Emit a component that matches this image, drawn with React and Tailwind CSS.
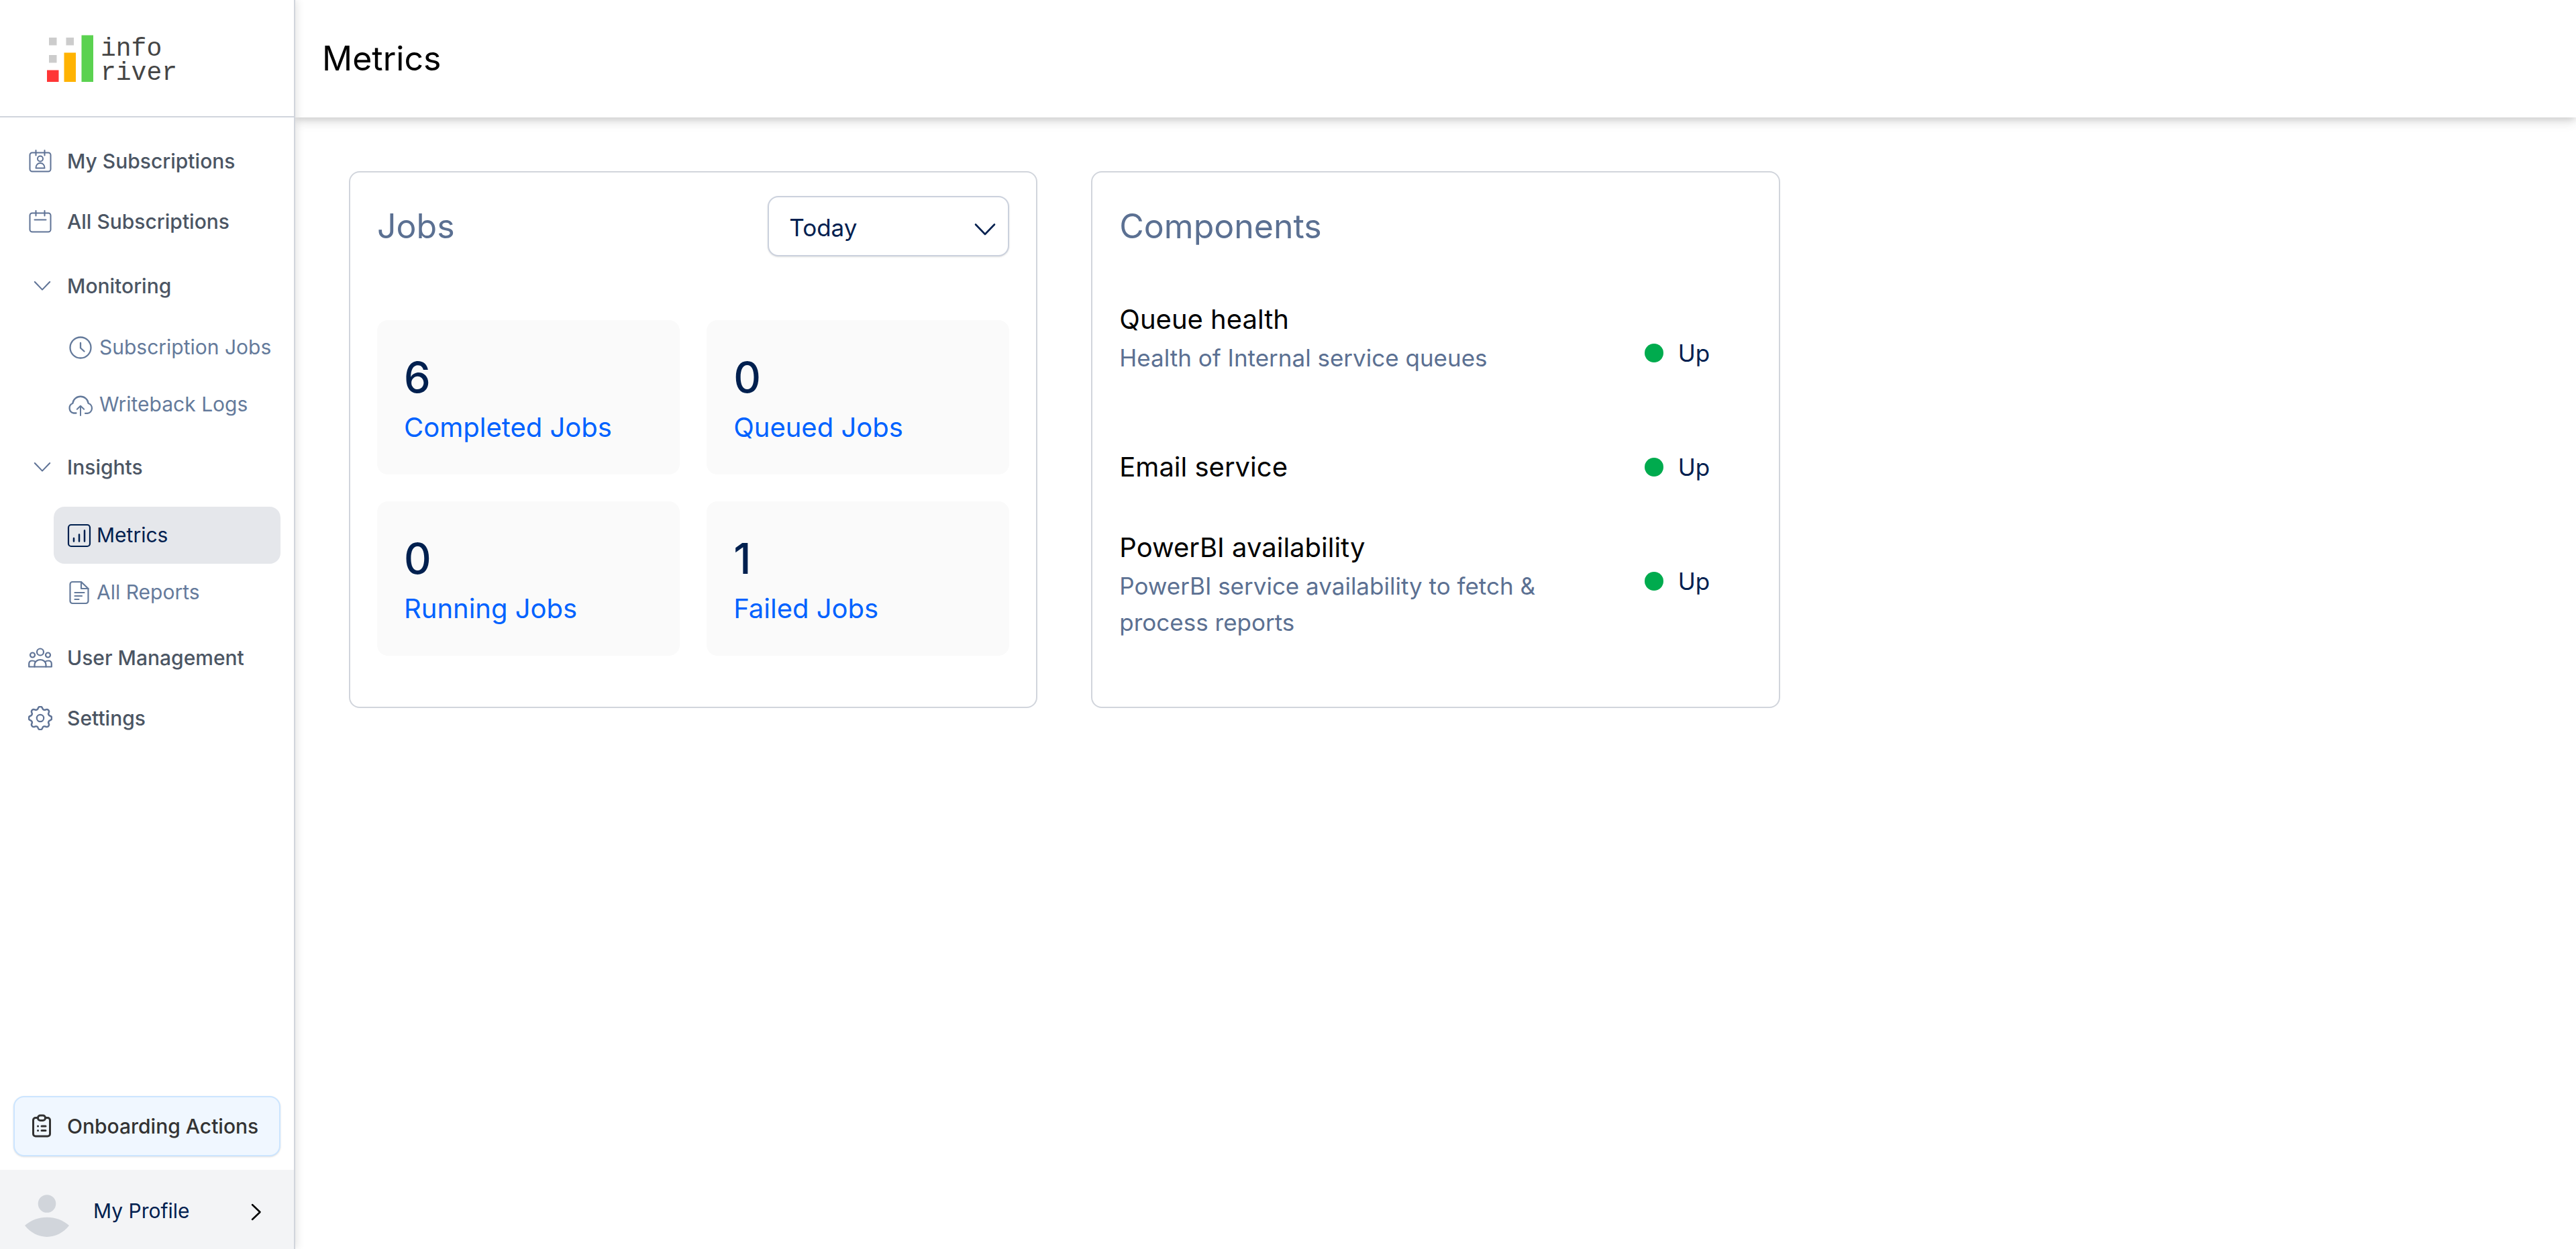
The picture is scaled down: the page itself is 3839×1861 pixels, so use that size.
import React from "react";

const line = { fill: "none", stroke: "currentColor", strokeLinecap: "round", strokeLinejoin: "round" };

function Calendar({ children }) {
  return (
    <svg viewBox="0 0 36 36" className="size-9" {...line} strokeWidth="2">
      <rect x="2.5" y="5.5" width="31" height="28" rx="3.5" />
      <path d="M11.5 2v7.5M24.5 2v7.5" />
      {children}
    </svg>
  );
}

function MySubscriptionsIcon() {
  return (
    <Calendar>
      <circle cx="18" cy="14.5" r="4" />
      <path d="M11.500 28.500c0-4.500 2.500-7.500 6.500-7.500s6.500 3 6.500 7.500z" />
    </Calendar>
  );
}

function AllSubscriptionsIcon() {
  return (
    <Calendar>
      <path d="M9.500 15.500h17" />
    </Calendar>
  );
}

function ChevronDown({ className }) {
  return (
    <svg viewBox="0 0 32 20" className={className} {...line} strokeWidth="2.600">
      <path d="M2 2.500 16 17 30 2.500" />
    </svg>
  );
}

function ClockIcon() {
  return (
    <svg viewBox="0 0 40 40" className="size-10" {...line} strokeWidth="2.300">
      <circle cx="20" cy="20" r="15.500" />
      <path d="M20 13v7.500l5.500 5" />
    </svg>
  );
}

function CloudIcon() {
  return (
    <svg viewBox="0 0 40 40" className="size-10" {...line} strokeWidth="2.300">
      <path d="M13.500 32.500H9.800A7.600 7.600 0 0 1 8.300 18 11.800 11.800 0 0 1 31.700 18 7.600 7.600 0 0 1 30.200 32.800H27" />
      <path d="M20 36V22.500M14.800 26.800l5.200-5 5.200 5" strokeWidth="2" />
    </svg>
  );
}

function ChartIcon() {
  return (
    <svg viewBox="0 0 36 36" className="size-9" {...line} strokeWidth="2.200">
      <rect x="2" y="2" width="32" height="32" rx="4" />
      <path d="M10 22v4.500M18 16.500v10M26 10.500v16" strokeWidth="2.500" />
    </svg>
  );
}

function ReportIcon() {
  return (
    <svg viewBox="0 0 36 36" className="size-9" {...line} strokeWidth="2.200">
      <path d="M21 2H8a3.500 3.500 0 0 0-3.500 3.500v25A3.500 3.500 0 0 0 8 34h20a3.500 3.500 0 0 0 3.500-3.500V12z" />
      <path d="M21 2v10h10.500M11.500 18h14M11.500 23h10.500M11.500 28h6" />
    </svg>
  );
}

function UsersIcon() {
  return (
    <svg viewBox="0 0 36 36" className="size-9" {...line} strokeWidth="2.200">
      <circle cx="18" cy="9.500" r="5" />
      <circle cx="6.500" cy="14" r="3.500" />
      <circle cx="29.500" cy="14" r="3.500" />
      <path d="M9.500 31.500v-3a8.500 7.500 0 0 1 17 0v3z" />
      <path d="M9.500 31.500H1.200v-4.500c0-3 1.800-4.500 4.800-4.500 2 0 3.500.3 4.800 1.500M26.500 31.500h8.300v-4.500c0-3-1.800-4.500-4.800-4.500-2 0-3.500.3-4.800 1.500" />
    </svg>
  );
}

function GearIcon() {
  return (
    <svg viewBox="0 0 36 36" className="size-9" {...line} strokeWidth="2.200">
      <circle cx="18" cy="18" r="5.200" />
      <path
        transform="translate(-2.700 -2.700) scale(1.150)"
        d="M15.200 5.200a2.900 2.900 0 0 1 5.600 0 2.900 2.900 0 0 0 4.300 1.800 2.900 2.900 0 0 1 3.900 3.900 2.900 2.900 0 0 0 1.800 4.300 2.900 2.900 0 0 1 0 5.600 2.900 2.900 0 0 0-1.800 4.300 2.900 2.900 0 0 1-3.900 3.900 2.900 2.900 0 0 0-4.300 1.800 2.900 2.900 0 0 1-5.600 0 2.900 2.900 0 0 0-4.300-1.800 2.900 2.900 0 0 1-3.900-3.900 2.900 2.900 0 0 0-1.800-4.300 2.900 2.900 0 0 1 0-5.600 2.900 2.900 0 0 0 1.800-4.300 2.900 2.900 0 0 1 3.900-3.900 2.900 2.900 0 0 0 4.300-1.800z"
      />
    </svg>
  );
}

function ClipboardIcon() {
  return (
    <svg viewBox="0 0 36 36" className="size-9" {...line} strokeWidth="3">
      <path d="M12 5.500H9A3.500 3.500 0 0 0 5.500 9v20.500A3.500 3.500 0 0 0 9 33h18a3.500 3.500 0 0 0 3.500-3.500V9A3.500 3.500 0 0 0 27 5.500h-3" />
      <rect x="12.500" y="2" width="11" height="7.500" rx="3.500" />
      <path d="M12.500 18h.1M12.500 24.500h.1M18 18h6M18 24.500h6" />
    </svg>
  );
}

function Avatar() {
  return (
    <svg viewBox="0 0 66 64" className="h-16 w-[66px] fill-[#d1d5db]">
      <circle cx="33" cy="13.500" r="13.300" />
      <path d="M0 46c18-16.500 48-16.500 66 0-18 22.500-48 22.500-66 0z" />
    </svg>
  );
}

function Logo() {
  return (
    <a href="#home" aria-label="info river" className="flex items-center gap-2.5">
      <svg viewBox="0 0 70 70" className="size-[70px]">
        <path fill="#ccc" d="M3 4h11.500v11.500H3zM28.500 4H40v11.500H28.500zM3 30h11.500v11.500H3z" />
        <path fill="#ff3636" d="M0 52.500h17.500V70H0z" />
        <path fill="#ffb302" d="M25.500 26.500H43V70H25.500z" />
        <path fill="#5bd250" d="M51.500 0.500H69V70H51.500z" />
      </svg>
      <span className="flex flex-col pt-2 font-['Liberation_Mono',monospace] text-[38px] leading-9 text-[#454545]">
        <span>info</span>
        <span>river</span>
      </span>
    </a>
  );
}

function NavItem({ icon, children }) {
  return (
    <a href="#nav" className="flex h-[90px] items-center gap-5 pl-10 text-[30px] font-medium text-[#4b5563]">
      <span className="flex w-10 justify-center text-[#5f7396]">{icon}</span>
      {children}
    </a>
  );
}

function NavGroup({ label, children, className }) {
  return (
    <div>
      <button type="button" aria-expanded="true" className="flex h-[90px] w-full items-center gap-5 pl-10 text-[30px] font-medium text-[#4b5563]">
        <span className="flex w-10 justify-center pl-1.5 text-[#5f7396]">
          <ChevronDown className="h-4 w-[26px]" />
        </span>
        {label}
      </button>
      <div className={className}>{children}</div>
    </div>
  );
}

function SubItem({ icon, active, children }) {
  return (
    <a
      href="#nav"
      aria-current={active ? "page" : undefined}
      className={
        active
          ? "flex h-[85px] items-center gap-2 rounded-2xl bg-[#e5e7eb] pl-5 text-[30px] text-[#00204f]"
          : "flex h-[85px] items-center gap-2 rounded-2xl pl-5 text-[30px] text-[#647a9b]"
      }
    >
      {icon}
      {children}
    </a>
  );
}

function Sidebar() {
  return (
    <aside className="z-10 flex w-[440px] shrink-0 flex-col border-r-2 border-gray-300 bg-white shadow-[2px_0_12px_rgba(0,0,0,0.12)]">
      <div className="flex h-[175px] items-center border-b-2 border-gray-300 pl-[70px]">
        <Logo />
      </div>
      <nav className="flex flex-1 flex-col pt-5 whitespace-nowrap">
        <NavItem icon={<MySubscriptionsIcon />}>My Subscriptions</NavItem>
        <NavItem icon={<AllSubscriptionsIcon />}>All Subscriptions</NavItem>
        <div className="mt-1.5 flex flex-col gap-1.5">
          <NavGroup label="Monitoring" className="mt-1 pr-5 pl-20">
            <SubItem icon={<ClockIcon />}>Subscription Jobs</SubItem>
            <SubItem icon={<CloudIcon />}>Writeback Logs</SubItem>
          </NavGroup>
          <NavGroup label="Insights" className="mt-3.5 pr-5 pb-2.5 pl-20">
            <SubItem active icon={<ChartIcon />}>Metrics</SubItem>
            <SubItem icon={<ReportIcon />}>All Reports</SubItem>
          </NavGroup>
        </div>
        <NavItem icon={<UsersIcon />}>User Management</NavItem>
        <NavItem icon={<GearIcon />}>Settings</NavItem>
      </nav>
      <div className="px-5 pb-5">
        <button
          type="button"
          className="flex h-[90px] w-full items-center gap-5 rounded-2xl border-2 border-[#cce5ff] bg-[#f0f7ff] pl-[22px] text-[30px] font-medium whitespace-nowrap text-[#333] shadow-sm"
        >
          <ClipboardIcon />
          Onboarding Actions
        </button>
      </div>
      <button type="button" className="flex h-[118px] items-center bg-gray-100 pr-12 pl-[37px] text-[30px] text-[#00204f]">
        <span className="pt-5">
          <Avatar />
        </span>
        <span className="flex-1 pt-1 pl-9 text-left">My Profile</span>
        <svg viewBox="0 0 16 26" className="mt-2 h-[26px] w-4 text-black" {...line} strokeWidth="2.500">
          <path d="M2 2 13.500 13 2 24" />
        </svg>
      </button>
    </aside>
  );
}

const jobs = [
  { count: 6, label: "Completed Jobs" },
  { count: 0, label: "Queued Jobs" },
  { count: 0, label: "Running Jobs" },
  { count: 1, label: "Failed Jobs" },
];

const components = [
  { name: "Queue health", detail: "Health of Internal service queues" },
  { name: "Email service" },
  { name: "PowerBI availability", detail: "PowerBI service availability to fetch & process reports" },
];

function Card({ title, action, children }) {
  return (
    <section className="flex min-h-[800px] flex-col rounded-2xl border-2 border-gray-300 bg-white px-10 pt-[35px]">
      <div className="flex h-[90px] items-center justify-between">
        <h2 className="text-[50px] text-[#5b7092]">{title}</h2>
        {action}
      </div>
      {children}
    </section>
  );
}

function PeriodSelect() {
  return (
    <div className="relative text-[#00204f]">
      <select
        aria-label="Period"
        className="h-[90px] w-[360px] appearance-none rounded-2xl border-2 border-[#cbd1dd] bg-white pt-1 pr-20 pl-[30px] text-[35px] shadow-sm"
      >
        <option>Today</option>
        <option>Yesterday</option>
        <option>Last 7 days</option>
      </select>
      <ChevronDown className="pointer-events-none absolute top-10 right-5 h-5 w-8" />
    </div>
  );
}

export default function App() {
  return (
    <div className="flex min-h-screen bg-white font-['Inter',sans-serif]">
      <Sidebar />
      <div className="flex min-w-0 flex-1 flex-col">
        <header className="flex h-[175px] items-center bg-white px-10 shadow-[0_8px_14px_-1px_rgba(0,0,0,0.13),0_4px_8px_-1px_rgba(0,0,0,0.08)]">
          <h1 className="text-[50px] text-black">Metrics</h1>
        </header>
        <main className="grid grid-cols-3 items-start gap-20 p-20">
          <Card title="Jobs" action={<PeriodSelect />}>
            <ul className="mt-[95px] grid grid-cols-2 gap-10">
              {jobs.map((job) => (
                <li key={job.label} className="flex flex-col rounded-2xl bg-[#fafafa] p-10">
                  <span className="text-[63px] leading-[90px] font-medium text-[#00204f]">{job.count}</span>
                  <a href="#jobs" className="text-[40px] leading-[60px] text-[#0062ff]">
                    {job.label}
                  </a>
                </li>
              ))}
            </ul>
          </Card>
          <Card title="Components">
            <ul className="mt-16 flex flex-col gap-2.5">
              {components.map((item) => (
                <li key={item.name} className="flex h-40 items-center">
                  <div className={item.detail ? "flex-1 self-start pr-20" : "flex-1 pr-20"}>
                    <h3 className="text-[40px] leading-[60px] text-black">{item.name}</h3>
                    {item.detail && <p className="text-[35px] leading-[54px] text-[#5b7092]">{item.detail}</p>}
                  </div>
                  <div className="flex w-40 items-center gap-[22px] text-[35px] text-[#00204f]">
                    <span className="size-7 rounded-full bg-[#00ab4e]" />
                    Up
                  </div>
                </li>
              ))}
            </ul>
          </Card>
        </main>
      </div>
    </div>
  );
}
